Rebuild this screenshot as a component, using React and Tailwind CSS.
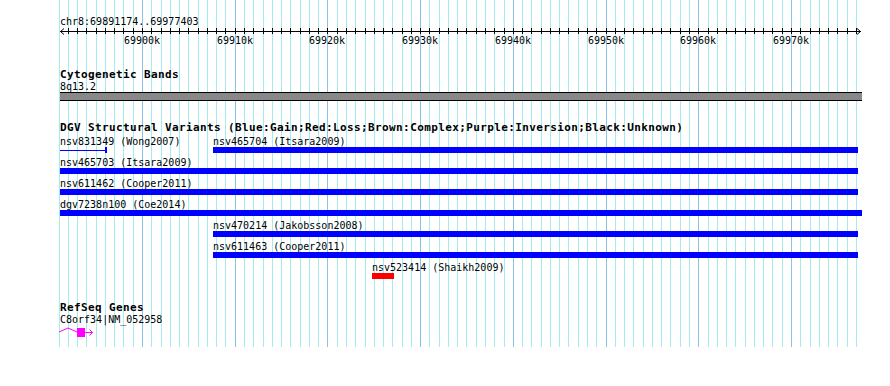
import React from 'react';

// genome coords -> page x (69900k sits on x=142, 9.2714 px per kbp)
const kx = (k) => Math.round(142 + (k - 69900) * 9.2714);

const KBP = [];
for (let k = 69891; k <= 69977; k++) KBP.push(k);
const MAJOR = [69900, 69910, 69920, 69930, 69940, 69950, 69960, 69970];

const BLUE = 'bg-[#0000ff]';
const SMALL = 'text-[10px] leading-[11px] whitespace-nowrap';
const HEAD = 'text-[11px] font-bold leading-[12px] tracking-[0.38px] whitespace-nowrap';

// each row: features with page x start/end
const ROWS = [
  [
    { start: 60, end: 107, label: 'nsv831349 (Wong2007)', thin: true },
    { start: 213, end: 858, label: 'nsv465704 (Itsara2009)' },
  ],
  [{ start: 60, end: 858, label: 'nsv465703 (Itsara2009)' }],
  [{ start: 60, end: 858, label: 'nsv611462 (Cooper2011)' }],
  [{ start: 60, end: 862, label: 'dgv7238n100 (Coe2014)' }],
  [{ start: 213, end: 858, label: 'nsv470214 (Jakobsson2008)' }],
  [{ start: 213, end: 858, label: 'nsv611463 (Cooper2011)' }],
  [{ start: 372, end: 394, label: 'nsv523414 (Shaikh2009)', red: true }],
];

function Grid() {
  return (
    <svg className="absolute left-0 top-0" width="890" height="347" shapeRendering="crispEdges">
      {KBP.map((k) => (
        <line
          key={k}
          x1={kx(k) + 0.5}
          x2={kx(k) + 0.5}
          y1="0"
          y2="347"
          stroke={k % 10 === 0 ? '#88c4ee' : '#a4ecf0'}
          strokeWidth="1"
        />
      ))}
    </svg>
  );
}

function Ruler() {
  return (
    <>
      <svg className="-ml-[60px] block" width="890" height="7" shapeRendering="crispEdges">
        <line x1="60" x2="861" y1="3.5" y2="3.5" stroke="#000" />
        {KBP.slice(1).map((k) => (
          <line key={k} x1={kx(k) + 0.5} x2={kx(k) + 0.5} y1="0" y2="6" stroke="#000" />
        ))}
        <polyline points="64,0.5 60.5,3.5 64,6.5" fill="none" stroke="#000" shapeRendering="auto" />
        <polyline points="857,0.5 860.5,3.5 857,6.5" fill="none" stroke="#000" shapeRendering="auto" />
      </svg>
      <div className="relative h-[11px]">
        {MAJOR.map((k) => (
          <span key={k} className={`absolute top-0 ${SMALL}`} style={{ left: kx(k) - 60 - 18 }}>
            {k}k
          </span>
        ))}
      </div>
    </>
  );
}

function Feature({ f, prevEnd }) {
  return (
    <div className="flex flex-none flex-col" style={{ marginLeft: f.start - prevEnd, width: f.end - f.start }}>
      <div className={`h-[11px] ${SMALL}`}>{f.label}</div>
      {f.thin ? (
        <div className="flex h-[6px] items-center">
          <div className={`h-px flex-1 ${BLUE}`} />
          <div className={`h-[6px] w-[2px] ${BLUE}`} />
        </div>
      ) : (
        <div className={`h-[6px] ${f.red ? 'bg-[#ff0000]' : BLUE}`} />
      )}
    </div>
  );
}

function GeneGlyph() {
  return (
    <svg className="mt-px block overflow-visible" width="40" height="11">
      <polyline points="-1,6 8,2 17,6" fill="none" stroke="#ff00ff" strokeWidth="1" />
      <rect x="17" y="2" width="8" height="9" fill="#ff00ff" />
      <line x1="25" x2="32.5" y1="6.5" y2="6.5" stroke="#ff00ff" />
      <polyline points="29.5,3.5 32.5,6.5 29.5,9.5" fill="none" stroke="#ff00ff" />
    </svg>
  );
}

export default function App() {
  return (
    <div className="relative h-[386px] w-[890px] overflow-hidden bg-white text-black font-['DejaVu_Sans_Mono','Liberation_Mono',monospace]">
      <Grid />
      <div className="relative flex flex-col pl-[60px] pt-[16px]">
        <div className={`h-[12px] ${SMALL}`}>chr8:69891174..69977403</div>
        <Ruler />

        <div className={`mt-[23px] h-[12px] ${HEAD}`}>Cytogenetic Bands</div>
        <div className={`h-[11px] ${SMALL}`}>8q13.2</div>
        <div className="h-[9px] w-[802px] border-y border-black bg-[#888888]" />

        <div className={`mt-[21px] h-[12px] ${HEAD}`}>
          DGV Structural Variants (Blue:Gain;Red:Loss;Brown:Complex;Purple:Inversion;Black:Unknown)
        </div>
        <div className="mt-[2px] flex flex-col gap-[4px]">
          {ROWS.map((row, i) => (
            <div key={i} className="-ml-[60px] flex">
              {row.map((f, j) => (
                <Feature key={j} f={f} prevEnd={j === 0 ? 0 : row[j - 1].end} />
              ))}
            </div>
          ))}
        </div>

        <div className={`mt-[23px] h-[12px] ${HEAD}`}>RefSeq Genes</div>
        <div className={`h-[11px] ${SMALL}`}>C8orf34|NM_052958</div>
        <GeneGlyph />
      </div>
    </div>
  );
}
